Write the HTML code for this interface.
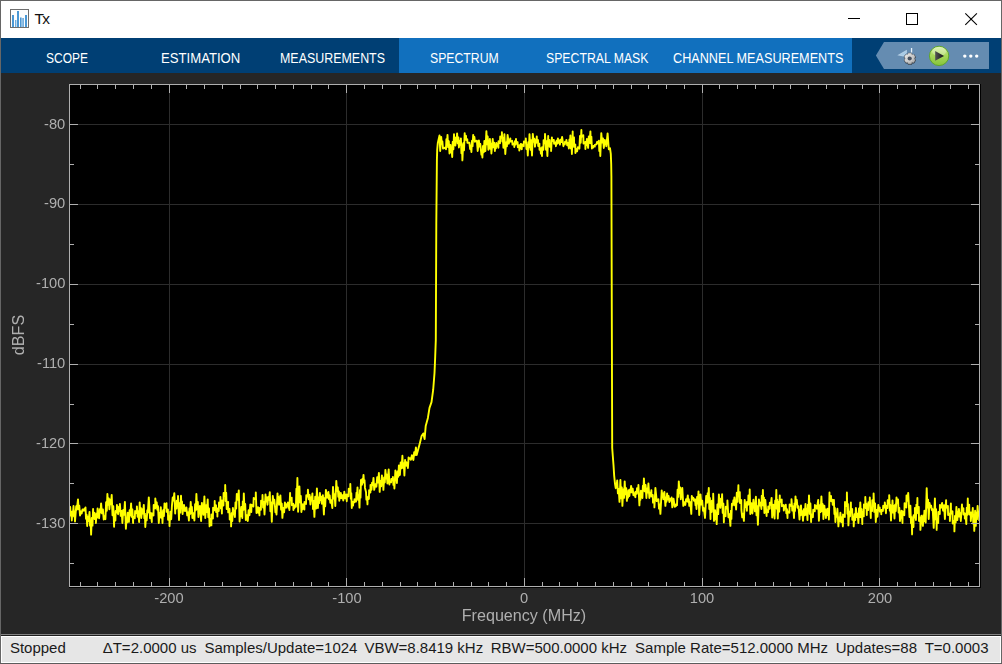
<!DOCTYPE html>
<html><head><meta charset="utf-8"><title>Tx</title>
<style>
html,body{margin:0;padding:0}
body{width:1002px;height:664px;overflow:hidden;position:relative;background:#262626;font-family:"Liberation Sans",sans-serif;}
.abs{position:absolute}
#frame-top{left:0;top:0;width:1002px;height:1px;background:#666}
#frame-left{left:0;top:0;width:1px;height:664px;background:#666}
#frame-right{left:1001px;top:0;width:1px;height:664px;background:#666}
#frame-bottom{left:0;top:663px;width:1002px;height:1px;background:#5c5c5c}
#title{left:1px;top:1px;width:1000px;height:37px;background:#fff}
#ttl{left:34.5px;top:10.1px;font-size:15.5px;line-height:17px;color:#111;letter-spacing:-1.7px;white-space:nowrap}
#tabs{left:1px;top:38px;width:1000px;height:35px;background:#003f74}
#tabact{left:399px;top:38px;width:453px;height:35px;background:#1170be}
.tab{position:absolute;top:49px;height:18px;line-height:18px;font-size:14px;color:#fff;white-space:nowrap;transform-origin:0 50%}
.yl,.xl,#xlabel,#ylabel{will-change:transform}
.yl{position:absolute;right:937px;font-size:14.67px;line-height:16px;color:#afafaf;white-space:nowrap;text-align:right}
.xl{position:absolute;top:590px;width:80px;text-align:center;font-size:14.67px;line-height:16px;color:#afafaf;white-space:nowrap}
#xlabel{left:424px;top:606px;width:200px;text-align:center;font-size:16.13px;line-height:18px;color:#afafaf;white-space:nowrap}
#ylabel{left:-82.2px;top:325.6px;width:200px;text-align:center;font-size:16.13px;line-height:18px;color:#afafaf;white-space:nowrap;transform:rotate(-90deg);transform-origin:50% 50%}
#sb-line{left:1px;top:634px;width:1000px;height:1px;background:#828282;box-shadow:0 1px 0 #1e1e1e}
#sb{left:1px;top:636px;width:1000px;height:27px;background:#e6e6e6;box-shadow:inset 1px 1px 0 #fff, inset -1px -1px 0 #fff}
.st{position:absolute;top:639.2px;font-size:15px;line-height:18px;color:#1a1a1a;white-space:nowrap;transform-origin:0 50%}
</style></head><body>
<div class="abs" id="title"></div>
<div class="abs" id="ttl">Tx</div>
<svg class="abs" style="left:0;top:0" width="1002" height="38" viewBox="0 0 1002 38">
 <!-- app icon -->
 <rect x="10.5" y="9.5" width="18" height="18" fill="#fdfdfd" stroke="#6e6e6e" stroke-width="1"/>
 <g fill="#4a97d4"><rect x="12" y="15" width="2" height="12"/><rect x="15" y="20" width="1.4" height="7" opacity=".8"/><rect x="17" y="11" width="2" height="16"/><rect x="20" y="17.5" width="1.6" height="9.5"/><rect x="22.2" y="18" width="1.8" height="9" opacity=".75"/><rect x="25" y="15" width="2" height="12"/></g>
 <!-- window controls -->
 <g shape-rendering="crispEdges" fill="none" stroke="#000" stroke-width="1">
  <line x1="848" y1="18.5" x2="860" y2="18.5"/>
  <rect x="906.5" y="13.5" width="11" height="11"/>
 </g>
 <g stroke="#000" stroke-width="1.1" fill="none"><line x1="965.3" y1="13.3" x2="976.9" y2="24.9"/><line x1="976.9" y1="13.3" x2="965.3" y2="24.9"/></g>
</svg>
<div class="abs" id="tabs"></div>
<div class="abs" id="tabact"></div>
<div class="tab" id="t1" style="left:46.1px;transform:scaleX(0.855)">SCOPE</div>
<div class="tab" id="t2" style="left:160.8px;transform:scaleX(0.938)">ESTIMATION</div>
<div class="tab" id="t3" style="left:280.4px;transform:scaleX(0.888)">MEASUREMENTS</div>
<div class="tab" id="t4" style="left:430.4px;transform:scaleX(0.874)">SPECTRUM</div>
<div class="tab" id="t5" style="left:546.1px;transform:scaleX(0.876)">SPECTRAL MASK</div>
<div class="tab" id="t6" style="left:673.1px;transform:scaleX(0.904)">CHANNEL MEASUREMENTS</div>
<svg class="abs" style="left:860px;top:38px" width="141" height="35" viewBox="860 38 141 35">
 <defs>
  <linearGradient id="gp" x1="0" y1="0" x2="0" y2="1"><stop offset="0" stop-color="#d6f0a0"/><stop offset="0.45" stop-color="#a9d95c"/><stop offset="1" stop-color="#86c43a"/></linearGradient>
  <linearGradient id="gg" x1="0" y1="0" x2="1" y2="1"><stop offset="0" stop-color="#f4f4f4"/><stop offset="1" stop-color="#a2a2a2"/></linearGradient>
  <linearGradient id="gt" x1="0" y1="0" x2="1" y2="0"><stop offset="0" stop-color="#555"/><stop offset="1" stop-color="#111"/></linearGradient>
 </defs>
 <path d="M875.9 55.5 L884 42 H989 V69 H884 Z" fill="#658cb1"/>
 <!-- flag + gear -->
 <path d="M897.3 55.3 L906.9 49.7 L906.9 52.8 L903.4 56.4 Z" fill="#cfe6f7" opacity=".75"/>
 <path d="M899.6 54.9 L906.2 51.2 L906.2 52.6 L903.2 55.6 Z" fill="#9cc9ea" opacity=".55"/>
 <rect x="910.9" y="48" width="1.3" height="4.6" fill="#e6f1fa"/>
 <g transform="translate(909.8 58.5)">
  <path d="M-1.83 -4.11 L-1.42 -5.31 L1.42 -5.31 L1.83 -4.11 L2.65 -3.64 L3.89 -3.89 L5.31 -1.42 L4.48 -0.47 L4.48 0.47 L5.31 1.42 L3.89 3.89 L2.65 3.64 L1.83 4.11 L1.42 5.31 L-1.42 5.31 L-1.83 4.11 L-2.65 3.64 L-3.89 3.89 L-5.31 1.42 L-4.48 0.47 L-4.48 -0.47 L-5.31 -1.42 L-3.89 -3.89 L-2.65 -3.64 Z" fill="#30343a" stroke="#30343a" stroke-width="1.5" stroke-linejoin="round" opacity=".9" transform="translate(0.1 0.3)"/>
  <path d="M-1.83 -4.11 L-1.42 -5.31 L1.42 -5.31 L1.83 -4.11 L2.65 -3.64 L3.89 -3.89 L5.31 -1.42 L4.48 -0.47 L4.48 0.47 L5.31 1.42 L3.89 3.89 L2.65 3.64 L1.83 4.11 L1.42 5.31 L-1.42 5.31 L-1.83 4.11 L-2.65 3.64 L-3.89 3.89 L-5.31 1.42 L-4.48 0.47 L-4.48 -0.47 L-5.31 -1.42 L-3.89 -3.89 L-2.65 -3.64 Z" fill="url(#gg)" stroke="url(#gg)" stroke-width="0.4" stroke-linejoin="round"/>
  <circle cx="-0.1" cy="0" r="2.9" fill="#d2d2d2" opacity=".9"/>
  <circle cx="-0.1" cy="0" r="2.1" fill="#46505e"/>
 </g>
 <!-- play -->
 <circle cx="939.1" cy="55.9" r="9.7" fill="url(#gp)" stroke="#5fa62f" stroke-width="1"/>
 <ellipse cx="939.1" cy="51.6" rx="7" ry="4.6" fill="#ffffff" opacity=".28"/>
 <path d="M935.2 51 L944 55.9 L935.2 60.7 Z" fill="url(#gt)"/>
 <g fill="#fff"><circle cx="964.8" cy="56.1" r="1.7"/><circle cx="970.8" cy="56.1" r="1.7"/><circle cx="976.7" cy="56.1" r="1.7"/></g>
</svg>
<svg id="plot" width="1002" height="664" viewBox="0 0 1002 664" style="position:absolute;left:0;top:0">
<rect x="69" y="84" width="912" height="504" fill="#000"/>
<g fill="#2c2c2c" shape-rendering="crispEdges"><rect x="169" y="85" width="1" height="501"/><rect x="346" y="85" width="1" height="501"/><rect x="524" y="85" width="1" height="501"/><rect x="702" y="85" width="1" height="501"/><rect x="879" y="85" width="1" height="501"/><rect x="70" y="124" width="909" height="1"/><rect x="70" y="204" width="909" height="1"/><rect x="70" y="284" width="909" height="1"/><rect x="70" y="364" width="909" height="1"/><rect x="70" y="443" width="909" height="1"/><rect x="70" y="523" width="909" height="1"/></g>
<clipPath id="axclip"><rect x="69.5" y="84.5" width="910" height="502"/></clipPath><g clip-path="url(#axclip)"><path d="M69.6 509.9 L70.2 507.0 L70.7 515.6 L71.3 511.9 L71.8 520.5 L72.3 511.5 L72.9 514.9 L73.5 506.0 L74.0 516.4 L74.5 511.1 L75.0 521.5 L76.2 506.2 L76.8 509.7 L78.0 499.4 L78.6 509.2 L79.3 505.7 L80.0 515.5 L80.8 511.5 L81.7 513.4 L82.5 509.4 L84.0 510.7 L84.4 508.6 L85.0 509.5 L85.5 507.4 L86.0 518.7 L86.6 514.7 L87.2 526.0 L87.9 516.7 L88.7 521.1 L89.5 511.9 L90.0 525.6 L90.6 520.9 L91.1 534.6 L91.8 518.0 L92.5 525.6 L93.1 508.9 L93.2 513.9 L94.5 512.8 L94.6 519.0 L95.9 517.9 L95.9 523.0 L96.5 513.5 L97.1 517.8 L97.6 508.4 L98.1 515.2 L98.7 511.4 L99.1 518.2 L99.8 509.1 L100.5 512.5 L101.1 503.4 L102.0 513.4 L102.9 509.4 L103.7 519.5 L104.6 516.2 L105.4 519.2 L106.1 502.3 L106.8 510.8 L107.4 493.9 L108.1 504.7 L108.8 498.4 L109.4 509.2 L110.1 499.7 L111.0 504.4 L111.7 494.9 L112.5 515.3 L113.3 506.2 L114.1 526.7 L114.2 516.7 L115.4 520.6 L115.6 511.0 L116.8 512.6 L116.9 504.9 L118.1 514.2 L118.7 507.0 L119.3 511.0 L119.9 503.9 L120.7 515.9 L121.6 510.9 L122.4 523.0 L123.2 510.0 L124.1 514.9 L124.9 501.9 L125.9 528.7 L126.5 518.9 L127.1 522.5 L127.7 512.7 L128.9 522.0 L129.6 510.2 L130.4 515.2 L131.1 503.4 L131.7 516.9 L132.4 509.5 L133.1 523.0 L133.2 516.8 L134.8 518.3 L135.1 511.0 L136.7 513.3 L136.9 506.4 L137.6 516.8 L138.3 511.5 L139.1 522.0 L139.7 502.4 L140.2 512.4 L140.8 508.0 L141.3 518.0 L142.1 509.3 L143.0 513.5 L143.8 504.9 L144.3 518.3 L144.9 513.6 L145.3 527.0 L146.0 516.8 L146.7 520.4 L147.3 510.2 L147.8 512.7 L148.8 497.4 L150.0 518.2 L150.8 513.2 L151.8 522.0 L151.9 513.2 L153.5 515.4 L153.7 505.0 L155.2 508.4 L155.3 498.4 L156.0 505.7 L156.7 502.4 L157.3 509.7 L158.0 506.2 L158.8 523.0 L159.5 513.0 L160.2 517.2 L160.8 507.2 L161.3 517.7 L162.0 512.5 L162.5 523.0 L163.1 510.2 L163.9 516.1 L164.5 503.4 L165.5 507.7 L166.5 503.1 L166.6 511.9 L167.9 509.5 L168.1 519.7 L169.4 516.1 L169.5 526.1 L170.3 511.8 L171.2 519.3 L172.0 504.9 L172.7 497.5 L173.5 500.5 L174.3 493.1 L175.2 513.5 L175.3 506.2 L176.5 508.6 L176.7 500.8 L177.9 503.1 L178.0 495.9 L179.0 520.0 L179.6 503.1 L180.3 512.6 L181.0 495.7 L181.5 508.1 L182.0 501.5 L182.6 514.0 L183.0 508.2 L183.5 510.6 L184.0 504.9 L185.0 511.0 L185.4 508.4 L186.0 509.9 L186.4 507.4 L187.2 515.4 L188.1 512.4 L188.9 520.5 L189.5 508.5 L190.2 513.9 L190.7 501.9 L191.3 512.9 L191.9 507.0 L192.4 518.0 L193.4 513.2 L194.4 520.5 L195.1 504.1 L195.8 510.3 L196.4 493.9 L197.1 509.0 L197.8 501.9 L198.4 517.0 L198.9 510.3 L199.4 512.6 L199.9 505.9 L201.1 521.0 L201.9 502.9 L202.4 510.8 L202.9 506.7 L203.4 514.7 L204.4 496.4 L205.3 518.0 L206.1 505.3 L206.9 512.1 L207.7 499.4 L208.3 517.3 L209.0 508.5 L209.6 526.4 L210.5 519.2 L211.4 525.4 L211.5 514.5 L212.9 518.6 L213.1 507.8 L214.6 510.3 L214.7 500.9 L214.8 507.5 L216.0 505.3 L216.1 512.1 L217.3 510.0 L217.4 516.5 L217.5 508.4 L218.8 511.0 L219.0 502.4 L220.3 504.7 L220.4 496.9 L220.9 508.4 L221.4 502.0 L221.9 513.5 L222.0 500.5 L223.4 505.5 L223.6 492.9 L225.1 496.4 L225.2 484.9 L225.6 501.1 L226.2 492.8 L226.7 509.0 L227.1 504.7 L227.6 506.2 L228.1 501.9 L228.2 512.4 L229.5 508.8 L229.7 519.6 L231.0 516.1 L231.1 526.4 L231.6 513.3 L232.3 521.0 L232.9 507.9 L233.5 514.2 L234.2 510.7 L234.9 517.0 L235.5 502.4 L236.2 508.5 L236.8 493.9 L237.8 499.7 L238.8 490.4 L239.6 521.5 L240.2 512.1 L240.8 516.2 L241.3 506.9 L242.3 518.0 L242.8 501.4 L243.4 509.9 L243.8 493.4 L244.5 509.4 L245.2 504.0 L245.8 520.0 L246.8 515.2 L247.8 521.0 L248.6 510.2 L249.5 515.2 L250.3 504.4 L251.3 512.0 L251.5 504.8 L253.4 506.5 L253.7 497.9 L255.7 499.5 L255.8 492.4 L256.5 513.0 L257.0 509.4 L257.5 510.7 L258.0 507.2 L258.5 512.8 L259.0 509.8 L259.5 515.4 L259.6 508.0 L260.9 509.7 L261.1 500.6 L262.4 502.6 L262.5 494.9 L263.1 507.5 L263.8 501.9 L264.5 514.5 L265.5 494.4 L266.1 501.5 L266.8 497.5 L267.5 504.7 L268.2 497.0 L269.0 499.8 L269.8 492.1 L270.4 511.3 L271.1 502.5 L271.8 521.7 L272.8 495.9 L273.5 503.2 L274.3 499.6 L275.0 506.9 L275.4 512.2 L276.0 509.2 L276.5 514.5 L277.5 493.4 L277.9 501.2 L278.5 496.9 L279.0 504.7 L279.4 498.2 L280.0 501.8 L280.4 495.4 L281.1 509.6 L281.8 503.7 L282.4 517.9 L283.2 507.9 L284.1 512.4 L284.9 502.4 L286.1 507.7 L286.7 504.3 L287.4 505.8 L287.9 502.4 L288.4 507.7 L289.0 504.7 L289.4 510.0 L290.1 492.9 L290.2 500.7 L291.7 497.7 L291.9 505.2 L293.3 503.7 L293.4 510.0 L293.9 507.0 L294.4 508.1 L294.9 505.2 L295.9 506.7 L296.4 488.7 L296.9 495.9 L297.4 477.9 L298.1 511.8 L299.4 486.4 L300.0 502.4 L300.8 496.0 L301.4 512.0 L301.9 506.9 L302.4 509.3 L302.9 504.2 L303.4 507.7 L303.9 505.9 L304.4 509.5 L304.5 502.0 L306.0 503.9 L306.3 495.2 L307.8 496.6 L307.9 489.7 L308.7 499.2 L309.6 494.9 L310.4 504.5 L311.0 497.4 L311.7 500.5 L312.4 493.4 L313.0 509.0 L313.7 501.3 L314.4 516.9 L315.2 496.8 L316.1 508.5 L316.9 488.4 L317.9 508.0 L318.5 497.8 L319.2 503.1 L319.9 492.9 L320.5 500.0 L321.2 496.6 L321.9 503.7 L322.9 495.2 L323.9 514.5 L324.5 498.1 L325.2 506.3 L325.9 489.9 L327.1 497.7 L328.4 491.9 L329.0 499.2 L329.7 495.4 L330.3 502.7 L331.3 500.2 L332.3 508.0 L333.0 486.9 L333.8 498.5 L334.6 494.4 L335.3 506.0 L336.3 480.9 L337.0 490.7 L337.8 487.4 L338.3 496.7 L338.9 491.4 L339.3 500.7 L339.8 495.3 L340.3 498.2 L340.8 492.9 L341.6 498.2 L342.5 495.2 L343.3 500.5 L344.3 491.7 L345.1 498.2 L346.0 494.7 L346.8 501.2 L346.9 494.4 L348.5 496.3 L348.7 488.7 L350.2 490.7 L350.3 483.9 L350.8 498.6 L351.3 493.3 L351.8 508.0 L351.9 504.3 L353.1 505.5 L353.2 501.6 L354.4 502.3 L354.5 499.1 L355.0 500.6 L355.5 500.1 L356.0 501.6 L356.5 492.7 L357.0 496.2 L357.5 487.4 L358.1 499.9 L358.8 495.1 L359.5 507.6 L360.0 489.9 L360.5 497.6 L361.0 479.9 L362.0 484.7 L362.5 478.7 L363.0 480.8 L363.5 474.9 L364.0 482.7 L364.5 480.1 L365.0 487.9 L366.0 491.9 L366.4 499.6 L367.0 496.7 L367.5 504.4 L367.6 497.4 L368.9 498.9 L369.1 490.3 L370.4 492.5 L370.5 484.9 L371.5 489.7 L372.1 482.6 L372.8 485.0 L373.5 477.9 L374.2 489.9 L375.4 484.2 L376.4 486.7 L377.2 477.1 L378.1 482.5 L378.9 472.9 L379.7 491.9 L380.4 480.9 L381.2 486.4 L381.9 475.4 L382.4 484.4 L383.0 481.0 L383.4 489.9 L384.1 477.4 L384.8 482.5 L385.4 469.9 L386.1 478.6 L386.8 474.8 L387.4 483.5 L388.7 469.4 L389.4 484.5 L389.5 481.5 L391.1 482.3 L391.3 479.0 L392.8 479.6 L392.9 476.9 L393.4 484.9 L393.9 480.4 L394.4 488.5 L395.4 470.4 L395.9 479.3 L396.4 474.0 L396.9 483.0 L397.5 471.5 L398.3 476.8 L398.9 465.4 L399.9 475.0 L400.7 462.4 L401.6 468.3 L402.4 455.7 L403.0 467.8 L403.8 463.4 L404.4 475.5 L405.1 459.9 L405.2 462.8 L406.4 462.2 L406.6 465.7 L407.8 464.9 L407.9 468.0 L408.6 457.4 L409.3 458.9 L410.1 458.3 L410.9 459.7 L411.9 455.2 L412.4 458.5 L412.9 456.7 L413.4 460.0 L414.2 452.2 L415.1 455.2 L415.9 447.4 L416.7 455.0 L419.9 443.0 L421.6 436.1 L423.3 433.4 L424.6 439.1 L425.7 426.1 L426.6 422.8 L427.9 417.9 L429.5 407.9 L431.5 402.1 L433.2 389.7 L434.5 373.1 L435.2 356.6 L435.8 340.0 L436.3 224.0 L436.9 160.0 L437.2 149.9 L437.8 142.9 L439.5 135.4 L440.2 151.0 L441.2 136.9 L441.8 143.9 L442.4 141.5 L443.0 148.5 L445.0 147.7 L446.0 149.2 L446.4 139.1 L447.0 145.0 L447.5 134.9 L448.1 147.1 L448.8 141.2 L449.5 153.5 L450.5 144.9 L451.0 152.3 L451.6 149.5 L452.2 157.0 L452.7 141.9 L453.4 149.2 L454.0 134.1 L454.4 141.0 L455.0 138.6 L455.4 145.5 L456.0 137.5 L456.6 141.4 L457.1 133.4 L457.7 143.4 L458.4 137.5 L458.9 147.5 L459.6 141.2 L460.3 144.7 L460.9 138.4 L461.4 153.3 L462.0 145.5 L462.4 160.4 L463.2 143.3 L464.0 150.3 L464.7 133.1 L464.8 136.8 L466.0 135.8 L466.2 140.0 L467.3 139.2 L467.4 142.7 L469.4 142.7 L470.1 149.0 L470.8 145.6 L471.4 152.0 L472.0 140.7 L472.6 146.1 L473.2 134.9 L473.8 139.6 L474.4 137.0 L474.9 141.7 L476.9 140.7 L477.7 151.0 L478.9 140.4 L479.5 146.5 L480.3 143.9 L480.9 149.9 L481.4 154.6 L481.9 152.7 L482.4 157.5 L483.0 146.0 L483.8 152.3 L484.4 140.9 L485.4 151.0 L486.4 131.1 L487.0 144.3 L487.7 136.5 L488.4 149.7 L488.9 142.2 L489.4 146.4 L489.9 138.9 L490.4 148.9 L490.9 143.4 L491.4 153.5 L492.7 138.9 L493.4 147.2 L494.2 142.6 L494.9 151.0 L495.3 145.5 L495.9 148.4 L496.4 142.9 L497.0 145.9 L497.7 144.7 L498.4 147.7 L498.5 141.3 L500.0 143.3 L500.2 136.5 L501.8 138.2 L501.9 132.1 L502.3 141.5 L502.9 138.3 L503.4 147.7 L504.4 134.1 L505.3 154.0 L506.1 142.5 L506.9 146.4 L507.6 134.9 L508.8 143.7 L509.3 140.3 L509.9 141.7 L510.3 138.4 L510.5 141.6 L512.2 140.8 L512.5 144.6 L514.2 143.3 L514.3 147.0 L514.9 141.3 L515.5 144.6 L516.0 138.9 L516.1 143.5 L517.6 142.1 L517.8 147.2 L519.2 145.2 L519.3 150.5 L519.8 145.8 L520.3 148.6 L520.8 143.9 L521.8 149.2 L521.9 144.3 L523.7 146.2 L523.9 141.4 L525.7 142.6 L525.8 138.4 L526.4 149.0 L527.2 144.8 L527.8 155.5 L528.3 142.1 L529.0 147.4 L529.5 134.1 L530.5 149.7 L531.2 140.2 L532.0 155.5 L532.8 133.9 L533.5 141.8 L534.3 138.7 L535.0 146.7 L535.6 140.3 L536.2 142.8 L536.8 136.4 L536.9 142.0 L538.0 140.1 L538.2 146.0 L539.4 143.7 L539.5 149.7 L540.5 148.2 L540.9 153.6 L541.5 150.6 L542.0 156.0 L542.1 147.1 L543.4 149.8 L543.6 140.1 L544.9 143.2 L545.0 133.9 L546.0 149.7 L546.6 141.2 L547.4 156.0 L548.2 135.9 L548.2 142.5 L549.6 140.1 L549.7 146.7 L551.1 145.6 L551.1 151.0 L551.9 137.4 L552.1 141.1 L553.8 139.9 L554.1 143.7 L555.8 142.2 L555.9 146.2 L556.6 140.8 L557.3 143.7 L557.9 138.4 L558.6 142.7 L559.3 140.4 L559.9 144.7 L560.6 139.6 L561.4 142.0 L562.1 136.9 L563.4 146.2 L563.5 143.9 L564.8 144.4 L565.0 141.7 L566.3 142.6 L566.4 139.9 L567.2 145.4 L568.1 143.0 L568.9 148.5 L569.4 139.5 L569.9 144.4 L570.4 135.4 L570.9 148.5 L571.4 140.8 L571.9 154.0 L572.7 131.4 L572.8 139.9 L574.0 137.4 L574.1 146.9 L575.3 144.5 L575.4 153.0 L576.2 148.9 L577.1 151.3 L577.9 147.2 L579.4 148.7 L580.0 135.9 L580.7 142.7 L581.4 129.9 L581.5 136.9 L583.3 135.2 L583.5 143.6 L585.3 142.0 L585.4 149.0 L585.9 142.8 L586.4 145.1 L586.9 138.9 L588.1 148.0 L588.8 136.4 L589.6 143.0 L590.4 131.4 L590.8 143.2 L591.4 136.7 L591.9 148.5 L592.0 147.2 L593.3 147.5 L593.5 145.9 L594.8 146.5 L594.9 144.9 L596.4 144.4 L597.2 141.8 L598.1 143.3 L598.9 140.7 L599.3 151.0 L599.9 145.7 L600.3 156.0 L601.3 133.1 L602.1 142.6 L603.0 138.5 L603.8 148.0 L604.8 139.9 L605.3 144.0 L605.9 142.0 L606.3 146.2 L607.6 133.4 L608.8 149.2 L610.0 148.2 L610.8 153.9 L611.2 163.9 L611.4 175.9 L612.2 448.0 L612.8 456.0 L613.5 465.0 L614.2 475.9 L615.0 483.9 L615.7 488.2 L616.1 483.4 L616.7 485.2 L617.2 480.4 L617.9 493.4 L618.7 489.0 L619.5 501.9 L620.4 479.9 L621.1 498.3 L621.8 487.5 L622.4 505.9 L623.2 489.5 L624.0 497.9 L624.7 481.4 L625.4 494.3 L626.2 488.1 L626.9 500.9 L627.4 493.4 L628.0 497.7 L628.4 490.2 L629.4 496.0 L630.0 489.4 L630.6 492.4 L631.1 485.9 L631.9 492.3 L632.7 488.7 L633.4 495.2 L634.1 493.2 L635.4 497.2 L635.5 491.7 L636.8 493.7 L637.0 488.3 L638.3 489.5 L638.4 484.9 L639.4 505.4 L639.9 496.2 L640.4 499.9 L640.9 490.7 L641.4 495.3 L641.9 493.3 L642.4 498.0 L642.9 485.7 L643.4 490.6 L643.9 478.4 L644.7 491.4 L645.6 485.0 L646.4 498.0 L647.0 488.8 L647.8 492.5 L648.4 483.4 L649.4 498.0 L650.0 492.9 L650.7 495.2 L651.4 490.2 L651.5 496.5 L652.8 495.0 L653.0 502.6 L654.3 499.7 L654.4 507.4 L655.4 487.9 L656.7 501.1 L658.4 499.2 L659.0 508.6 L659.7 504.5 L660.4 513.9 L661.7 490.4 L662.2 496.1 L662.8 493.4 L663.4 499.2 L664.4 491.9 L665.4 505.9 L665.9 497.6 L666.5 501.7 L667.1 493.4 L667.8 499.5 L668.6 496.0 L669.4 502.1 L670.1 499.0 L670.9 500.5 L671.6 497.4 L672.3 507.4 L673.5 498.7 L674.8 506.9 L675.3 505.0 L675.9 506.1 L676.3 504.1 L677.0 505.1 L677.6 489.6 L678.3 496.9 L678.8 481.4 L679.5 493.1 L680.2 487.5 L680.8 499.2 L681.3 491.7 L681.8 495.3 L682.3 487.9 L683.3 505.9 L684.3 502.1 L685.3 504.9 L686.1 499.2 L687.0 501.1 L687.8 495.4 L688.3 502.2 L688.8 499.1 L689.3 505.9 L690.3 502.1 L691.3 513.9 L691.8 495.9 L692.5 498.9 L693.3 497.7 L694.0 500.7 L695.0 499.2 L695.5 505.1 L696.0 503.1 L696.5 509.0 L697.1 496.9 L697.8 503.5 L698.5 491.4 L699.2 515.0 L700.5 494.4 L701.3 504.5 L702.2 500.6 L703.0 510.7 L703.8 508.2 L705.0 518.0 L706.2 495.9 L707.2 502.7 L707.7 493.1 L708.3 497.5 L708.8 487.9 L709.3 509.0 L709.9 497.9 L710.5 519.0 L710.5 508.6 L711.7 511.9 L711.9 500.8 L713.1 503.4 L713.2 493.7 L714.0 520.9 L715.1 510.2 L715.7 519.3 L716.2 515.0 L716.7 524.1 L717.4 504.5 L718.2 514.1 L718.9 494.4 L719.4 503.5 L720.0 498.6 L720.4 507.7 L721.0 499.4 L721.6 502.4 L722.1 494.1 L722.7 512.9 L723.4 503.7 L723.9 522.4 L724.0 514.1 L725.6 516.3 L725.8 506.6 L727.3 508.8 L727.4 500.4 L728.4 517.2 L729.4 514.2 L730.4 525.9 L730.9 510.7 L731.4 518.9 L731.9 503.7 L732.9 505.2 L733.4 500.1 L733.9 502.5 L734.4 497.4 L735.0 505.4 L735.6 501.5 L736.1 509.5 L736.8 492.8 L737.7 501.8 L738.4 485.1 L738.5 496.3 L739.8 492.1 L740.0 503.0 L741.3 500.0 L741.4 509.9 L742.2 517.3 L743.1 513.6 L743.9 520.9 L744.7 499.9 L745.4 507.0 L746.2 503.6 L746.9 510.7 L747.0 502.0 L748.2 504.7 L748.4 495.4 L749.6 498.5 L749.7 489.4 L750.3 514.0 L751.4 503.2 L752.4 513.5 L753.4 499.7 L753.9 507.1 L754.4 503.7 L754.9 511.2 L755.9 496.7 L756.5 515.2 L757.2 506.3 L757.9 524.7 L758.9 499.4 L759.7 505.6 L760.6 502.7 L761.4 509.0 L761.8 495.6 L762.4 503.3 L762.9 489.9 L763.3 505.5 L763.9 497.4 L764.4 513.0 L765.3 499.9 L766.6 516.0 L766.7 510.0 L768.1 512.2 L768.3 506.4 L769.7 508.7 L769.8 502.7 L770.8 504.7 L771.6 497.9 L772.2 517.5 L773.3 504.7 L774.6 518.5 L775.2 500.5 L775.8 507.9 L776.3 489.9 L776.8 508.8 L777.3 499.6 L777.8 518.5 L778.5 502.2 L779.2 511.6 L779.8 495.4 L779.9 502.1 L781.7 499.6 L781.9 506.2 L783.7 505.0 L783.8 510.5 L784.5 506.9 L785.2 508.2 L785.8 504.7 L786.3 513.3 L787.0 509.3 L787.5 518.0 L787.6 511.2 L789.4 512.7 L789.6 504.4 L791.4 506.2 L791.5 499.1 L792.3 510.6 L793.2 506.5 L794.0 518.0 L794.5 503.4 L795.0 510.9 L795.5 496.4 L796.1 504.1 L796.8 499.9 L797.5 507.7 L798.5 506.2 L799.5 519.5 L800.0 509.6 L800.5 515.2 L801.0 505.4 L801.6 514.9 L802.3 511.3 L803.0 520.8 L803.8 509.3 L804.7 515.3 L805.5 503.9 L806.1 514.7 L806.8 509.2 L807.5 520.0 L807.9 504.8 L808.5 510.5 L809.0 495.4 L809.7 513.9 L810.4 503.5 L811.1 522.0 L811.3 514.2 L812.9 517.2 L813.2 509.7 L814.8 511.3 L814.9 504.9 L815.6 507.6 L816.3 506.0 L816.9 508.7 L818.2 499.9 L818.9 520.8 L819.7 505.1 L820.6 512.1 L821.4 496.4 L822.1 511.1 L822.8 504.2 L823.4 519.0 L824.4 505.7 L824.9 514.4 L825.4 509.3 L825.9 518.0 L826.4 511.5 L826.9 515.1 L827.4 508.7 L827.9 515.3 L828.4 512.8 L828.9 519.5 L829.5 492.4 L829.6 497.3 L831.0 495.9 L831.2 501.3 L832.6 499.7 L832.7 504.7 L833.9 499.9 L834.4 514.0 L834.9 507.9 L835.4 522.0 L836.0 513.7 L836.8 516.9 L837.4 508.7 L838.4 526.4 L839.0 517.7 L839.8 521.4 L840.4 512.7 L841.2 522.0 L842.1 517.1 L842.9 526.4 L843.0 514.5 L844.8 516.9 L845.0 501.9 L846.8 506.4 L846.9 492.4 L847.4 513.8 L847.9 504.0 L848.4 525.4 L849.2 511.6 L850.1 516.3 L850.9 502.4 L851.0 511.7 L852.2 509.1 L852.3 519.7 L853.6 516.4 L853.7 526.4 L854.4 514.3 L855.2 520.1 L855.9 507.9 L856.7 517.0 L857.6 513.8 L858.4 523.0 L859.0 508.4 L859.7 517.0 L860.3 502.4 L861.0 517.2 L861.7 509.1 L862.3 524.0 L862.4 511.6 L863.8 516.4 L863.9 504.5 L865.2 506.7 L865.3 496.9 L865.8 508.3 L866.4 503.6 L866.8 515.0 L866.9 508.7 L868.2 510.1 L868.4 502.3 L869.7 505.1 L869.8 497.4 L870.8 518.0 L870.9 508.6 L872.1 511.1 L872.3 500.3 L873.5 502.4 L873.6 493.4 L874.3 511.9 L875.1 503.5 L875.8 522.0 L876.6 510.0 L877.5 516.8 L878.3 504.9 L878.4 509.0 L879.7 507.5 L879.9 511.6 L881.2 510.7 L881.3 514.2 L881.4 509.9 L882.9 510.9 L883.2 505.7 L884.7 507.7 L884.8 502.4 L886.0 513.2 L886.1 505.7 L887.5 508.1 L887.7 500.2 L889.1 502.8 L889.2 495.1 L889.8 510.6 L890.4 505.0 L891.0 520.5 L891.5 508.3 L892.0 512.6 L892.5 500.4 L893.1 512.6 L893.8 506.3 L894.5 518.5 L895.1 504.8 L895.8 511.0 L896.5 497.4 L897.2 502.7 L898.0 499.4 L898.6 512.5 L899.3 507.9 L900.0 521.0 L900.4 513.7 L901.0 517.9 L901.5 510.7 L902.5 523.0 L902.6 511.4 L904.3 515.2 L904.6 503.1 L906.3 507.5 L906.5 495.4 L907.4 500.7 L908.2 492.9 L909.5 517.0 L910.4 505.7 L911.0 523.2 L911.6 516.9 L912.1 534.4 L912.2 522.6 L913.5 527.0 L913.6 515.3 L914.9 517.4 L914.9 507.9 L915.9 520.0 L916.4 504.6 L917.0 513.2 L917.4 497.9 L917.5 510.7 L918.8 506.9 L919.0 521.0 L920.3 517.5 L920.4 529.9 L921.4 515.7 L921.9 522.5 L922.4 519.2 L922.9 525.9 L923.4 515.2 L923.9 521.4 L924.4 510.7 L925.7 522.5 L926.7 488.1 L927.4 507.5 L928.1 499.6 L928.7 519.0 L929.5 502.9 L930.3 507.4 L931.1 505.7 L931.9 510.2 L932.7 509.2 L933.7 527.9 L934.9 498.4 L935.5 519.2 L936.1 509.2 L936.7 529.9 L936.8 520.5 L938.2 522.9 L938.4 511.9 L939.8 514.0 L939.9 504.9 L940.9 507.7 L942.1 502.9 L943.1 510.7 L944.1 505.2 L944.9 519.0 L946.1 500.1 L946.2 507.8 L947.9 505.9 L948.1 515.1 L949.8 513.5 L949.9 521.0 L950.9 503.4 L951.0 513.8 L952.5 511.2 L952.7 523.6 L954.3 520.7 L954.4 531.4 L955.0 515.9 L955.7 522.4 L956.4 506.9 L957.4 520.0 L957.8 512.4 L958.4 516.5 L958.9 508.9 L959.5 516.5 L960.2 513.3 L960.8 521.0 L962.0 504.4 L962.1 510.1 L963.4 508.3 L963.5 514.5 L964.8 513.3 L964.8 518.5 L965.6 515.2 L966.3 524.0 L966.8 507.6 L967.4 514.7 L967.8 498.4 L967.9 506.3 L969.2 504.7 L969.4 514.6 L970.7 512.4 L970.8 521.0 L971.5 513.1 L972.2 515.8 L972.8 507.9 L973.3 523.6 L973.8 515.2 L974.3 530.9 L975.1 510.7 L975.8 525.9 L976.4 512.7 L977.0 519.1 L977.6 505.9 L978.2 515.2 L978.8 511.6 L979.3 520.9" fill="none" stroke="#ffff00" stroke-width="1.9" stroke-linejoin="round" stroke-linecap="butt"/></g>
<g fill="#afafaf" shape-rendering="crispEdges"><rect x="69" y="84" width="911" height="1"/><rect x="69" y="586" width="911" height="1"/><rect x="69" y="84" width="1" height="503"/><rect x="979" y="84" width="1" height="503"/><rect x="80" y="85" width="1" height="4"/><rect x="80" y="582" width="1" height="4"/><rect x="97" y="85" width="1" height="4"/><rect x="97" y="582" width="1" height="4"/><rect x="115" y="85" width="1" height="4"/><rect x="115" y="582" width="1" height="4"/><rect x="133" y="85" width="1" height="4"/><rect x="133" y="582" width="1" height="4"/><rect x="151" y="85" width="1" height="4"/><rect x="151" y="582" width="1" height="4"/><rect x="169" y="85" width="1" height="8"/><rect x="169" y="578" width="1" height="8"/><rect x="186" y="85" width="1" height="4"/><rect x="186" y="582" width="1" height="4"/><rect x="204" y="85" width="1" height="4"/><rect x="204" y="582" width="1" height="4"/><rect x="222" y="85" width="1" height="4"/><rect x="222" y="582" width="1" height="4"/><rect x="240" y="85" width="1" height="4"/><rect x="240" y="582" width="1" height="4"/><rect x="257" y="85" width="1" height="4"/><rect x="257" y="582" width="1" height="4"/><rect x="275" y="85" width="1" height="4"/><rect x="275" y="582" width="1" height="4"/><rect x="293" y="85" width="1" height="4"/><rect x="293" y="582" width="1" height="4"/><rect x="311" y="85" width="1" height="4"/><rect x="311" y="582" width="1" height="4"/><rect x="328" y="85" width="1" height="4"/><rect x="328" y="582" width="1" height="4"/><rect x="346" y="85" width="1" height="8"/><rect x="346" y="578" width="1" height="8"/><rect x="364" y="85" width="1" height="4"/><rect x="364" y="582" width="1" height="4"/><rect x="382" y="85" width="1" height="4"/><rect x="382" y="582" width="1" height="4"/><rect x="400" y="85" width="1" height="4"/><rect x="400" y="582" width="1" height="4"/><rect x="417" y="85" width="1" height="4"/><rect x="417" y="582" width="1" height="4"/><rect x="435" y="85" width="1" height="4"/><rect x="435" y="582" width="1" height="4"/><rect x="453" y="85" width="1" height="4"/><rect x="453" y="582" width="1" height="4"/><rect x="471" y="85" width="1" height="4"/><rect x="471" y="582" width="1" height="4"/><rect x="488" y="85" width="1" height="4"/><rect x="488" y="582" width="1" height="4"/><rect x="506" y="85" width="1" height="4"/><rect x="506" y="582" width="1" height="4"/><rect x="524" y="85" width="1" height="8"/><rect x="524" y="578" width="1" height="8"/><rect x="542" y="85" width="1" height="4"/><rect x="542" y="582" width="1" height="4"/><rect x="559" y="85" width="1" height="4"/><rect x="559" y="582" width="1" height="4"/><rect x="577" y="85" width="1" height="4"/><rect x="577" y="582" width="1" height="4"/><rect x="595" y="85" width="1" height="4"/><rect x="595" y="582" width="1" height="4"/><rect x="613" y="85" width="1" height="4"/><rect x="613" y="582" width="1" height="4"/><rect x="631" y="85" width="1" height="4"/><rect x="631" y="582" width="1" height="4"/><rect x="648" y="85" width="1" height="4"/><rect x="648" y="582" width="1" height="4"/><rect x="666" y="85" width="1" height="4"/><rect x="666" y="582" width="1" height="4"/><rect x="684" y="85" width="1" height="4"/><rect x="684" y="582" width="1" height="4"/><rect x="702" y="85" width="1" height="8"/><rect x="702" y="578" width="1" height="8"/><rect x="719" y="85" width="1" height="4"/><rect x="719" y="582" width="1" height="4"/><rect x="737" y="85" width="1" height="4"/><rect x="737" y="582" width="1" height="4"/><rect x="755" y="85" width="1" height="4"/><rect x="755" y="582" width="1" height="4"/><rect x="773" y="85" width="1" height="4"/><rect x="773" y="582" width="1" height="4"/><rect x="790" y="85" width="1" height="4"/><rect x="790" y="582" width="1" height="4"/><rect x="808" y="85" width="1" height="4"/><rect x="808" y="582" width="1" height="4"/><rect x="826" y="85" width="1" height="4"/><rect x="826" y="582" width="1" height="4"/><rect x="844" y="85" width="1" height="4"/><rect x="844" y="582" width="1" height="4"/><rect x="862" y="85" width="1" height="4"/><rect x="862" y="582" width="1" height="4"/><rect x="879" y="85" width="1" height="8"/><rect x="879" y="578" width="1" height="8"/><rect x="897" y="85" width="1" height="4"/><rect x="897" y="582" width="1" height="4"/><rect x="915" y="85" width="1" height="4"/><rect x="915" y="582" width="1" height="4"/><rect x="933" y="85" width="1" height="4"/><rect x="933" y="582" width="1" height="4"/><rect x="950" y="85" width="1" height="4"/><rect x="950" y="582" width="1" height="4"/><rect x="968" y="85" width="1" height="4"/><rect x="968" y="582" width="1" height="4"/><rect x="70" y="563" width="4" height="1"/><rect x="975" y="563" width="4" height="1"/><rect x="70" y="523" width="8" height="1"/><rect x="971" y="523" width="8" height="1"/><rect x="70" y="483" width="4" height="1"/><rect x="975" y="483" width="4" height="1"/><rect x="70" y="443" width="8" height="1"/><rect x="971" y="443" width="8" height="1"/><rect x="70" y="404" width="4" height="1"/><rect x="975" y="404" width="4" height="1"/><rect x="70" y="364" width="8" height="1"/><rect x="971" y="364" width="8" height="1"/><rect x="70" y="324" width="4" height="1"/><rect x="975" y="324" width="4" height="1"/><rect x="70" y="284" width="8" height="1"/><rect x="971" y="284" width="8" height="1"/><rect x="70" y="244" width="4" height="1"/><rect x="975" y="244" width="4" height="1"/><rect x="70" y="204" width="8" height="1"/><rect x="971" y="204" width="8" height="1"/><rect x="70" y="164" width="4" height="1"/><rect x="975" y="164" width="4" height="1"/><rect x="70" y="124" width="8" height="1"/><rect x="971" y="124" width="8" height="1"/></g>
</svg>
<div class="yl" style="top:115.5px">-80</div><div class="yl" style="top:195.3px">-90</div><div class="yl" style="top:275.1px">-100</div><div class="yl" style="top:354.9px">-110</div><div class="yl" style="top:434.7px">-120</div><div class="yl" style="top:514.5px">-130</div><div class="xl" style="left:129.0px">-200</div><div class="xl" style="left:306.7px">-100</div><div class="xl" style="left:484.4px">0</div><div class="xl" style="left:662.1px">100</div><div class="xl" style="left:839.8px">200</div>
<div class="abs" id="xlabel">Frequency (MHz)</div>
<div class="abs" id="ylabel">dBFS</div>
<div class="abs" id="sb-line"></div>
<div class="abs" id="sb"></div>
<div class="st" id="s0" style="left:9.9px">Stopped</div>
<div class="st" id="s1" style="left:102.7px">&#916;T=2.0000 us</div>
<div class="st" id="s2" style="left:204.4px">Samples/Update=1024</div>
<div class="st" id="s3" style="left:364.4px">VBW=8.8419 kHz</div>
<div class="st" id="s4" style="left:490.7px">RBW=500.0000 kHz</div>
<div class="st" id="s5" style="left:635.1px">Sample Rate=512.0000 MHz</div>
<div class="st" id="s6" style="left:835.7px">Updates=88</div>
<div class="st" id="s7" style="left:924.7px">T=0.0003</div>
<div class="abs" id="frame-top"></div><div class="abs" id="frame-left"></div><div class="abs" id="frame-right"></div><div class="abs" id="frame-bottom"></div>
</body></html>
